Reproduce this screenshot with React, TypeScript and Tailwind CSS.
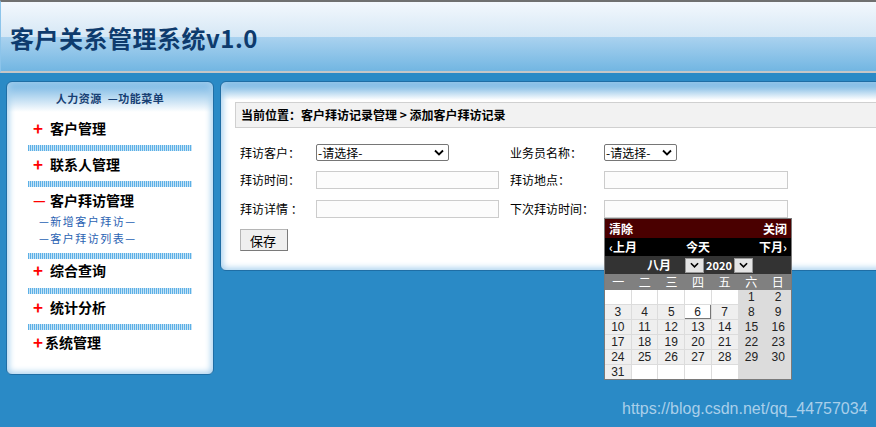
import React from "react";

const menu = [
  { sign: "+", label: "客户管理" },
  { sign: "+", label: "联系人管理" },
];

const weekDays = ["一", "二", "三", "四", "五", "六", "日"];

function Chevron({ className = "" }: { className?: string }) {
  return (
    <svg viewBox="0 0 10 6" className={className} fill="none" stroke="currentColor" strokeWidth="1.8">
      <path d="M1 1l4 4 4-4" />
    </svg>
  );
}

function FakeSelect({ width }: { width: string }) {
  return (
    <div className={`${width} h-[17px] flex items-center justify-between border border-[#767676] rounded-[2px] bg-white pl-[1px] pr-[4px] text-[12px] leading-none text-black`}>
      <span>-请选择-</span>
      <Chevron className="w-[10px] h-[7px] text-black" />
    </div>
  );
}

function Separator() {
  return <div className="h-[6px] mx-[21px] bg-[repeating-linear-gradient(90deg,#5cb0e6_0_1px,#c6e3f6_1px_2px)]" />;
}

function Calendar() {
  const cells: (number | null)[] = [null, null, null, null, null];
  for (let d = 1; d <= 31; d++) cells.push(d);
  while (cells.length < 42) cells.push(null);

  return (
    <div className="absolute -left-px top-[17px] w-[188px] border border-[#7a7a7a] bg-[#dcdcdc] z-10 font-bold">
      <div className="h-[19px] bg-[#4a0000] flex items-center justify-between px-[4px] text-white text-[12px]">
        <span>清除</span>
        <span>关闭</span>
      </div>
      <div className="h-[18px] bg-black flex items-center justify-between px-[4px] text-white text-[12px]">
        <span>‹上月</span>
        <span>今天</span>
        <span>下月›</span>
      </div>
      <div className="h-[18px] bg-[#333333] flex items-center text-white text-[12px] pl-[42px]">
        <span>八月</span>
        <span className="ml-[14px] w-[19px] h-[15px] bg-[#e4e4e4] border border-[#999] flex items-center justify-center">
          <Chevron className="w-[9px] h-[6px] text-black" />
        </span>
        <span className="ml-[2px] text-[11px]">2020</span>
        <span className="ml-[2px] w-[19px] h-[15px] bg-[#e4e4e4] border border-[#999] flex items-center justify-center">
          <Chevron className="w-[9px] h-[6px] text-black" />
        </span>
      </div>
      <div className="h-[16px] bg-[#808080] grid grid-cols-7 items-center text-white text-[12px] font-normal leading-[16px] text-center">
        {weekDays.map((w) => (
          <span key={w}>{w}</span>
        ))}
      </div>
      <div
        className="grid grid-cols-7 gap-px bg-[#dcdcdc] font-normal text-[12px] text-[#222]"
        style={{ fontFamily: '"Liberation Sans", Arial, sans-serif' }}
      >
        {cells.map((d, i) => {
          const col = i % 7;
          const weekend = col >= 5;
          let bg = weekend ? "bg-[#dcdcdc]" : d === null ? "bg-white" : "bg-[#efefef]";
          if (d === 6) bg = "bg-white border-r border-b border-[#777]";
          return (
            <div key={i} className={`h-[14px] leading-[15px] text-center ${bg}`}>
              {d ?? ""}
            </div>
          );
        })}
      </div>
    </div>
  );
}

export default function App() {
  return (
    <div
      className="relative w-[876px] h-[427px] overflow-hidden bg-[#2a8ac6] text-black"
      style={{ fontFamily: '"Noto Sans CJK SC", "Liberation Sans", sans-serif' }}
    >
      {/* header */}
      <div className="h-[73px] border-t-2 border-t-[#707070] border-b-2 border-b-[#c6c6c6] border-l border-l-[#8cc4ea] bg-[linear-gradient(to_bottom,#f3f8fd_0,#d5e7f5_35px,#aad2ef_35px,#72b6e2_100%)] flex items-center pl-[9px] pt-[2px]">
        <h1 className="text-[24px] font-bold text-[#0e3b6d] leading-none tracking-[0.5px]">客户关系管理系统v1.0</h1>
      </div>

      <div className="flex gap-[6px] pl-[6px] pt-[8px]">
        {/* left menu */}
        <div className="w-[208px] h-[294px] rounded-[6px] border border-[#1f6ea5] bg-[linear-gradient(to_bottom,#6fb2e2,#ffffff_30px)] shadow-[inset_0_0_6px_2px_#a7d0ee] overflow-hidden">
          <div className="h-[33px] flex items-center justify-center text-[11px] font-bold text-[#173f74] tracking-[0.5px]">
            人力资源&nbsp;&nbsp;—功能菜单
          </div>
          {menu.map((m, i) => (
            <React.Fragment key={m.label}>
              {i > 0 && <Separator />}
              <div className="h-[30px] pt-[4px] pl-[26px] flex items-start text-[14px] font-bold leading-[18px]">
                <span className="w-[17px] text-[#ff0000] text-[17px]">+</span>
                <span>{m.label}</span>
              </div>
            </React.Fragment>
          ))}
          <Separator />
          <div className="h-[26px] pt-[4px] pl-[26px] flex items-start text-[14px] font-bold leading-[18px]">
            <span className="w-[17px] text-[#ff0000]">—</span>
            <span>客户拜访管理</span>
          </div>
          <div className="pl-[32px] text-[11px] text-[#2a62b2] leading-[17px] tracking-[1.5px]">
            <div>—新增客户拜访—</div>
            <div>—客户拜访列表—</div>
          </div>
          <div className="h-[6px]" />
          <Separator />
          <div className="h-[29px] pt-[2px] pl-[26px] flex items-start text-[14px] font-bold leading-[18px]">
            <span className="w-[17px] text-[#ff0000] text-[17px]">+</span>
            <span>综合查询</span>
          </div>
          <Separator />
          <div className="h-[30px] pt-[4px] pl-[26px] flex items-start text-[14px] font-bold leading-[18px]">
            <span className="w-[17px] text-[#ff0000] text-[17px]">+</span>
            <span>统计分析</span>
          </div>
          <Separator />
          <div className="pt-[3px] pl-[26px] flex items-start text-[14px] font-bold leading-[18px]">
            <span className="w-[12px] text-[#ff0000] text-[17px]">+</span>
            <span>系统管理</span>
          </div>
        </div>

        {/* main panel */}
        <div className="flex-1 -mr-[12px] h-[190px] rounded-[6px] border border-[#1f6ea5] bg-[linear-gradient(to_bottom,#5fa9dd,#ffffff_18px)] shadow-[inset_0_0_6px_2px_#a7d0ee] pt-[20px]">
          <div className="ml-[14px] h-[26px] border border-[#d0d0d0] bg-[#f2f2f2] flex items-center pl-[5px] text-[12px] font-bold">
            当前位置：客户拜访记录管理 &gt; 添加客户拜访记录
          </div>

          <div className="pl-[19px] text-[12px]">
            <div className="mt-[16px] h-[17px] flex items-center">
              <span className="w-[76px]">拜访客户：</span>
              <FakeSelect width="w-[133px]" />
              <span className="ml-[61px] w-[94px]">业务员名称：</span>
              <FakeSelect width="w-[73px]" />
            </div>
            <div className="mt-[10px] h-[18px] flex items-center">
              <span className="w-[76px]">拜访时间：</span>
              <div className="w-[183px] h-[18px] border border-[#cccccc] bg-[#fcfcfc]" />
              <span className="ml-[11px] w-[94px]">拜访地点：</span>
              <div className="w-[184px] h-[18px] border border-[#cccccc] bg-[#fcfcfc]" />
            </div>
            <div className="mt-[11px] h-[18px] flex items-center">
              <span className="w-[76px]">拜访详情 ：</span>
              <div className="w-[183px] h-[18px] border border-[#cccccc] bg-[#fcfcfc]" />
              <span className="ml-[11px] w-[94px]">下次拜访时间：</span>
              <div className="relative w-[184px] h-[18px] border border-[#cccccc] bg-[#fcfcfc]">
                <Calendar />
              </div>
            </div>
            <div className="mt-[11px]">
              <button className="w-[48px] h-[22px] border border-[#b5b5b5] border-r-[#7a7a7a] border-b-[#7a7a7a] bg-[#efefef] text-[13px] text-left pl-[9px] leading-none">
                保存
              </button>
            </div>
          </div>
        </div>
      </div>

      <div
        className="absolute left-[622px] top-[397px] text-[16px] text-[#a9cfea]"
        style={{ fontFamily: '"Liberation Sans", Arial, sans-serif' }}
      >
        https://blog.csdn.net/qq_44757034
      </div>
    </div>
  );
}
